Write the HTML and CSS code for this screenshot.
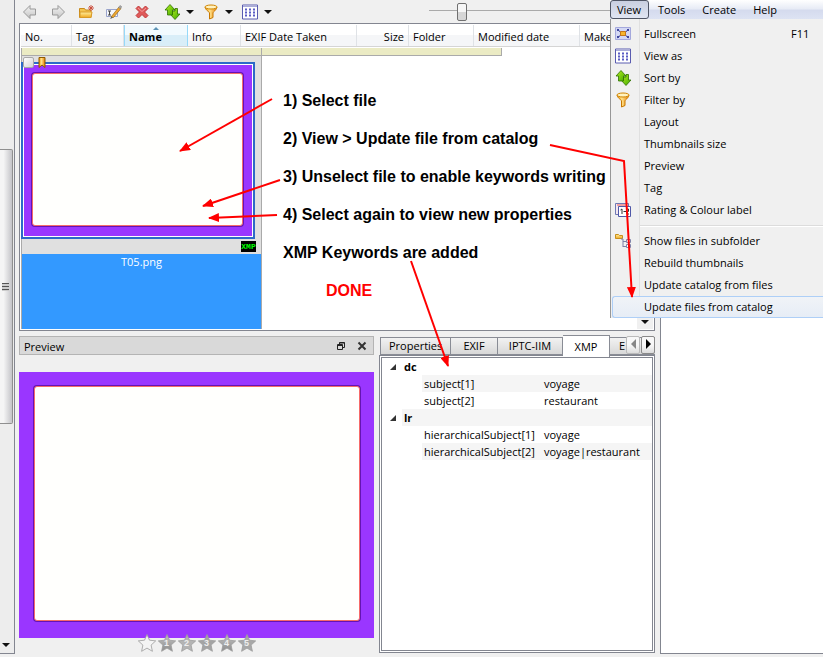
FILE: index.html
```html
<!DOCTYPE html>
<html lang="en">
<head>
<meta charset="utf-8">
<title>Photo catalog</title>
<link rel="stylesheet" href="styles.css">
</head>
<body>
<svg class="defs" aria-hidden="true">
  <defs>
    <linearGradient id="gold" x1="0" y1="0" x2="0" y2="1"><stop offset="0" stop-color="#fff0a0"/><stop offset="1" stop-color="#f0a820"/></linearGradient>
    <linearGradient id="amber" x1="0" y1="0" x2="1" y2="0"><stop offset="0" stop-color="#f59a00"/><stop offset=".4" stop-color="#ffe28a"/><stop offset="1" stop-color="#e87c00"/></linearGradient>
    <linearGradient id="green" x1="0" y1="0" x2="1" y2="1"><stop offset="0" stop-color="#b8f020"/><stop offset="1" stop-color="#3fa800"/></linearGradient>
    <linearGradient id="steel" x1="0" y1="0" x2="0" y2="1"><stop offset="0" stop-color="#f4f4f4"/><stop offset="1" stop-color="#c4c4c4"/></linearGradient>
    <linearGradient id="silver" x1="0" y1="0" x2="0" y2="1"><stop offset="0" stop-color="#c4c4c4"/><stop offset="1" stop-color="#8c8c8c"/></linearGradient>
  </defs>
  <symbol id="i-back" viewBox="0 0 16 16"><path d="M1.500 8 8 1.500V5h5.500v6H8v3.500z" fill="url(#steel)" stroke="#999" stroke-linejoin="round"/></symbol>
  <symbol id="i-fwd" viewBox="0 0 16 16"><path d="M14.500 8 8 1.500V5H2.500v6H8v3.500z" fill="url(#steel)" stroke="#999" stroke-linejoin="round"/></symbol>
  <symbol id="i-folder" viewBox="0 0 16 16"><path d="M1.500 13.500v-9h5l1 1.500H13v7.500z" fill="#f3c552" stroke="#c88a1c"/><path d="M2 13.500V8h12l-1 5.500z" fill="url(#gold)" stroke="#d89a28"/><path d="M13 1v6M10 4h6M11 2l4 4M15 2l-4 4" stroke="#c84838" stroke-width=".9"/></symbol>
  <symbol id="i-rename" viewBox="0 0 16 16"><path d="M.5 5.500h11v7H.5z" fill="#f4f6fb" stroke="#9aa4cc"/><path d="M2 7h3M2 11h3M3.500 7v4" stroke="#444"/><path d="M5 13 13 3l2 1.500L7.500 13.500z" fill="#f0a830" stroke="#9a6a18" stroke-width=".7"/><path d="m12.500 3.500 1.500-2 1.800 1.200-1.500 2z" fill="#a8a8a8" stroke="#777" stroke-width=".5"/><path d="m5 13-.8 2 3.200-1.500z" fill="#555"/></symbol>
  <symbol id="i-delete" viewBox="0 0 16 16"><path d="M2 4.500 4.500 2 8 5.500 11.500 2 14 4.500 10.500 8l3.500 3.500-2.500 2.500L8 10.500 4.500 14 2 11.500 5.500 8z" fill="#e05a5a" stroke="#c03838" stroke-linejoin="round"/><path d="m4 4 4 3.500L12 4" stroke="#f29a9a" fill="none"/></symbol>
  <symbol id="i-sort" viewBox="0 0 16 16"><path d="M8.500 7H11V4.500h2.500V10H16l-5 5.500L6 10h2.500z" fill="url(#green)" stroke="#2e7000" stroke-width=".8"/><path d="M6 .5 11 6H8.500v5H3.500V6H1z" fill="url(#green)" stroke="#2e7000" stroke-width=".8"/></symbol>
  <symbol id="i-filter" viewBox="0 0 16 16"><path d="M2 3c1 4 4 4 4.500 6v6l3.500-1.500V9c.5-2 3-2 4-6z" fill="url(#amber)" stroke="#c87800"/><ellipse cx="8" cy="3" rx="6" ry="2" fill="#fff2c0" stroke="#d08400"/></symbol>
  <symbol id="i-grid" viewBox="0 0 16 16"><path d="M.5 1h15v14H.5z" fill="#fff" stroke="#5a5cb0"/><path d="M1 2.500h14" stroke="#a9acd8"/><path d="M3 5.500h10M3 8.500h10M3 11.500h10" stroke="#5a5cc4" stroke-width="2" stroke-dasharray="2 2"/></symbol>
  <symbol id="i-full" viewBox="0 0 16 16"><path d="M.5 1.500h15v12H.5z" fill="#d4d8f4" stroke="#a4a8dc"/><path d="m2 3 4 3.500M14 3l-4 3.500M2 12l4-3M14 12l-4-3" stroke="#30348c"/><path d="M2 3h2v2H2zM12 3h2v2h-2zM2 10h2v2H2zM12 10h2v2h-2z" fill="#4048a0"/><path d="M5.500 5.500h5v4h-5z" fill="#f7b52c" stroke="#c87818"/></symbol>
  <symbol id="i-rating" viewBox="0 0 16 16"><path d="M.5 1.500h13v11H.5z" fill="#f4e8f0" stroke="#6f78b4"/><path d="M2 3h10" stroke="#e88" stroke-width="1.500"/><path d="M3.500 4.500h12v10h-12z" fill="#fff" stroke="#4f58a8"/><path d="M5.500 8 7 7v5M8.500 9.500H11M12 7h1.500v2.500H12V12h2" fill="none" stroke="#333"/></symbol>
  <symbol id="i-tree" viewBox="0 0 16 16"><path d="M.5 5.500v-4h3l1 1h3v3z" fill="url(#gold)" stroke="#c88f1c"/><path d="M8 6v8M8 8.500h3M8 13.500h3M6 6h2" stroke="#7c7fa4" fill="none"/><path d="M11.500 6.500h4v3h-4zM11.500 11.500h4v3h-4z" fill="#fff" stroke="#8184aa"/></symbol>
  <symbol id="i-star" viewBox="0 0 20 20"><path d="m10 1.500 2.500 5.700 6.200.7-4.600 4.200 1.300 6.200-5.400-3.200-5.400 3.200 1.300-6.200L1.300 7.900l6.200-.7z" stroke="#9c9c9c" stroke-width=".8"/></symbol>
</svg>

<div class="app">
  <aside class="rail">
    <div class="rail-thumb"><span class="grip"></span></div>
    <span class="tri down"></span>
  </aside>

  <main class="workspace">
    <div class="toolbar">
      <button class="tool" aria-label="Back"><svg><use href="#i-back"/></svg></button>
      <button class="tool" aria-label="Forward"><svg><use href="#i-fwd"/></svg></button>
      <button class="tool" aria-label="New folder"><svg><use href="#i-folder"/></svg></button>
      <button class="tool" aria-label="Rename"><svg><use href="#i-rename"/></svg></button>
      <button class="tool" aria-label="Delete"><svg><use href="#i-delete"/></svg></button>
      <div class="drops">
        <button class="tool" aria-label="Sort by"><svg><use href="#i-sort"/></svg><span class="tri"></span></button>
        <button class="tool" aria-label="Filter by"><svg><use href="#i-filter"/></svg><span class="tri"></span></button>
        <button class="tool" aria-label="View as"><svg><use href="#i-grid"/></svg><span class="tri"></span></button>
      </div>
      <input class="zoom" type="range" min="0" max="100" value="13" aria-label="Thumbnail size">
    </div>

    <section class="list">
      <div class="columns">
        <button class="c-no">No.</button>
        <button class="c-tag">Tag</button>
        <button class="c-name">Name</button>
        <button class="c-info">Info</button>
        <button class="c-exif">EXIF Date Taken</button>
        <button class="c-size">Size</button>
        <button class="c-folder">Folder</button>
        <button class="c-date">Modified date</button>
        <button class="c-make">Make</button>
      </div>
      <div class="group-bar"></div>
      <div class="thumbs">
        <figure class="cell">
          <div class="cell-top">
            <div class="frame"><div class="picture small"></div></div>
            <input class="tick" type="checkbox" aria-label="Tag T05.png">
            <svg class="ribbon" viewBox="0 0 8 12"><path d="M1 .5h6v10L4 8l-3 2.500z" fill="url(#amber)" stroke="#8c5a00"/></svg>
            <span class="badge">XMP</span>
          </div>
          <figcaption>T05.png</figcaption>
        </figure>
      </div>
      <span class="scroll-end"><span class="tri"></span></span>
    </section>

    <div class="docks">
      <section class="preview">
        <header class="dock-title">
          <h2>Preview</h2>
          <button aria-label="Float"><svg viewBox="0 0 10 10"><path d="M3.500 3V1.500h5v5H7M1.500 3.500h5v5h-5zM1.500 4.500h5M3.500 2h5" fill="none" stroke="#222"/></svg></button>
          <button aria-label="Close"><svg viewBox="0 0 10 10"><path d="m1.500 1.500 7 7m0-7-7 7" stroke="#333" stroke-width="2"/></svg></button>
        </header>
        <div class="picture large"></div>
        <div class="stars">
          <button aria-label="No rating"><svg fill="#f4f4f4"><use href="#i-star"/></svg></button>
          <button><svg fill="url(#silver)"><use href="#i-star"/></svg><span>1</span></button>
          <button><svg fill="#b4b4b4"><use href="#i-star"/></svg><span>2</span></button>
          <button><svg fill="#a4a4a4"><use href="#i-star"/></svg><span>3</span></button>
          <button><svg fill="url(#silver)"><use href="#i-star"/></svg><span>4</span></button>
          <button><svg fill="#a8a8a8"><use href="#i-star"/></svg><span>5</span></button>
        </div>
      </section>

      <section class="props">
        <div class="tabs">
          <button class="t-prop">Properties</button>
          <button class="t-exif">EXIF</button>
          <button class="t-iptc">IPTC-IIM</button>
          <button class="t-xmp active">XMP</button>
          <button class="t-more">E</button>
          <div class="tab-scroll">
            <button aria-label="Previous tabs"><span class="tri left"></span></button>
            <button aria-label="Next tabs"><span class="tri right"></span></button>
          </div>
        </div>
        <div class="pane">
          <div class="pane-inner">
            <table>
              <colgroup><col class="k-open"><col class="k-indent"><col class="k-key"><col></colgroup>
              <tbody>
                <tr><td><span class="expander"></span></td><th colspan="3">dc</th></tr>
                <tr class="alt"><td></td><td></td><td>subject[1]</td><td>voyage</td></tr>
                <tr><td></td><td></td><td>subject[2]</td><td>restaurant</td></tr>
                <tr class="alt"><td><span class="expander"></span></td><th colspan="3">lr</th></tr>
                <tr><td></td><td></td><td>hierarchicalSubject[1]</td><td>voyage</td></tr>
                <tr class="alt"><td></td><td></td><td>hierarchicalSubject[2]</td><td>voyage|restaurant</td></tr>
              </tbody>
            </table>
          </div>
        </div>
      </section>
    </div>
  </main>

  <aside class="side"></aside>
</div>

<nav class="menu">
  <div class="menubar">
    <button class="open">View</button>
    <button>Tools</button>
    <button>Create</button>
    <button>Help</button>
  </div>
  <div class="menu-list">
    <button><svg><use href="#i-full"/></svg><span>Fullscreen</span><kbd>F11</kbd></button>
    <button><svg><use href="#i-grid"/></svg><span>View as</span></button>
    <button><svg><use href="#i-sort"/></svg><span>Sort by</span></button>
    <button><svg><use href="#i-filter"/></svg><span>Filter by</span></button>
    <button><span>Layout</span></button>
    <button><span>Thumbnails size</span></button>
    <button><span>Preview</span></button>
    <button><span>Tag</span></button>
    <button><svg><use href="#i-rating"/></svg><span>Rating &amp; Colour label</span></button>
    <hr>
    <button><svg><use href="#i-tree"/></svg><span>Show files in subfolder</span></button>
    <button><span>Rebuild thumbnails</span></button>
    <button><span>Update catalog from files</span></button>
    <button class="hot"><span>Update files from catalog</span></button>
  </div>
</nav>

<ol class="notes">
  <li>1) Select file</li>
  <li>2) View &gt; Update file from catalog</li>
  <li>3) Unselect file to enable keywords writing</li>
  <li>4) Select again to view new properties</li>
  <li>XMP Keywords are added</li>
  <li class="done">DONE</li>
</ol>

<svg class="arrows" width="823" height="657" viewBox="0 0 823 657" aria-hidden="true">
  <defs><marker id="head" markerUnits="userSpaceOnUse" markerWidth="11" markerHeight="9" refX="10" refY="4.500" orient="auto"><path d="M0 0 11 4.500 0 9z" fill="#f00"/></marker></defs>
  <g fill="none" stroke="#f00" stroke-width="2" marker-end="url(#head)">
    <path d="M272 99 180 151"/>
    <path d="M550 145 624 161 632 297"/>
    <path d="M280 180 203 206"/>
    <path d="M277 215 209 218"/>
    <path d="M411 261 448 366"/>
  </g>
</svg>
</body>
</html>
```

FILE: styles.css
```css
*, *::before { box-sizing: border-box; }

body {
  margin: 0;
  background: #f0f0f0;
  color: #000;
  font: 11px/16px "Open Sans", "Noto Sans", sans-serif;
  overflow: hidden;
}

button {
  margin: 0;
  padding: 0;
  border: 0;
  background: none;
  color: inherit;
  font: inherit;
  text-align: left;
}

.defs { position: absolute; width: 0; height: 0; }

.tri {
  display: inline-block;
  border: 4px solid transparent;
  border-top-color: #111;
  border-bottom: 0;
}
.tri.left { border: 5px solid transparent; border-right-color: #888; border-left: 0; }
.tri.right { border: 5px solid transparent; border-left-color: #000; border-right: 0; }

.app {
  display: grid;
  grid-template-columns: 15px minmax(0, 1fr) 163px;
  column-gap: 4px;
  height: 100vh;
}

/* left scroll column */
.rail {
  display: flex;
  flex-direction: column;
  align-items: flex-start;
  justify-content: space-between;
  margin-bottom: 4px;
  padding: 149px 0 6px;
  border-right: 1px solid #838690;
  border-bottom: 1px solid #838690;
  background: #ededed;
}
.rail-thumb {
  display: flex;
  align-items: center;
  width: 13px;
  height: 275px;
  padding-left: 2px;
  border: 1px solid #8f8f8f;
  border-left: 0;
  border-radius: 0 2px 2px 0;
  background: linear-gradient(90deg, #f5f5f5 30%, #c4c4c8);
}
.grip {
  width: 7px;
  height: 8px;
  background: repeating-linear-gradient(#555 0 1px, #ccc 1px 3px);
}
.rail .down { margin-left: 2px; }

.workspace {
  display: flex;
  flex-direction: column;
  min-width: 0;
}

.toolbar {
  display: flex;
  align-items: center;
  gap: 12px;
  flex: none;
  height: 23px;
  padding-left: 3px;
}
.tool { display: flex; align-items: center; gap: 6px; height: 16px; }
.tool svg { flex: none; width: 16px; height: 16px; }
.drops { display: flex; gap: 9px; margin-left: 2px; }

.zoom {
  appearance: none;
  flex: 1;
  min-width: 0;
  height: 20px;
  margin: 0 0 0 145px;
  background: linear-gradient(#aaa, #aaa) 0 8px / 100% 1px no-repeat;
}
.zoom::-webkit-slider-thumb {
  appearance: none;
  width: 10px;
  height: 18px;
  border: 1px solid #707070;
  border-radius: 2px;
  background: linear-gradient(#f6f6f6 50%, #d6d6d6 50%);
}

.list {
  position: relative;
  flex: none;
  height: 308px;
  margin-right: 1px;
  padding: 1px;
  border: 1px solid #838690;
  background: #fff;
}
.columns {
  display: flex;
  height: 22px;
  border-bottom: 1px solid #d5d5d5;
  overflow: hidden;
}
.columns button {
  flex: none;
  padding: 2px 4px 0;
  border-right: 1px solid #dfe2e6;
  background: linear-gradient(#fff 50%, #f5f6f8 50%);
  white-space: nowrap;
}
.c-no { width: 51px; }
.c-tag { width: 52px; }
.columns .c-name {
  position: relative;
  width: 64px;
  border: solid #96d9f9;
  border-width: 0 1px;
  background: linear-gradient(#f2fafe 50%, #d9eef8 50%);
  font-weight: 700;
}
.c-name::before {
  content: "";
  position: absolute;
  top: 2px;
  left: 28px;
  border: 3px solid transparent;
  border-bottom-color: #5d93b5;
  border-top: 0;
}
.c-info { width: 53px; }
.c-exif { width: 116px; }
.columns .c-size { width: 52px; text-align: right; }
.c-folder { width: 65px; }
.c-date { width: 106px; }
.columns .c-make { flex: 1; }

.group-bar {
  width: 481px;
  height: 8px;
  margin-top: 1px;
  border: 1px solid #aaa;
  border-top: 0;
  background: linear-gradient(#aaa, #aaa) 239px 0 / 1px 100% no-repeat #ebebc4;
}

.cell {
  width: 241px;
  margin: 0;
  border: solid #aaa;
  border-width: 0 1px;
}
.cell-top {
  position: relative;
  height: 198px;
  padding-top: 6px;
  background: #e0e0e0;
}
.frame {
  width: 234px;
  height: 177px;
  margin-left: -1px;
  padding: 1px;
  border: 2px solid #2c69c8;
  background: #fff;
}
.picture { background: #9a36ff; }
.picture::before {
  content: "";
  display: block;
  height: 100%;
  border: 1px solid #f66a6a;
  border-radius: 3px;
  background: #fffffd;
  box-shadow: 0 0 0 1px #6414b4;
}
.small { height: 100%; padding: 8px 9px 10px 8px; }
.large { height: 266px; padding: 14px 14px 17px 15px; }
.tick {
  appearance: none;
  position: absolute;
  top: 1px;
  left: 1px;
  width: 11px;
  height: 11px;
  margin: 0;
  border: 1px solid #a8a8a8;
  border-radius: 2px;
  background: linear-gradient(135deg, #fff, #d4d4d4);
}
.ribbon { position: absolute; top: 1px; left: 16px; width: 8px; height: 12px; }
.badge {
  position: absolute;
  right: 5px;
  bottom: 2px;
  width: 15px;
  height: 11px;
  background: #000;
  color: #0f0;
  font: 700 8px/11px "Liberation Mono", monospace;
  text-align: center;
}
figcaption {
  height: 75px;
  background: #39f;
  color: #fff;
  text-align: center;
}

.scroll-end {
  position: absolute;
  right: 1px;
  bottom: 1px;
  width: 16px;
  height: 13px;
  background: #f0f0f0;
  line-height: 8px;
  text-align: center;
}

.docks {
  display: grid;
  grid-template-columns: 355px minmax(0, 1fr);
  column-gap: 5px;
  flex: 1;
  min-height: 0;
  padding: 5px 1px 5px 0;
}

.dock-title {
  display: flex;
  align-items: center;
  gap: 11px;
  height: 19px;
  margin-bottom: 17px;
  padding: 0 6px 0 4px;
  border: 1px solid #b4b4b4;
  background: #d9d9d9;
}
.dock-title h2 { flex: 1; margin: 0; padding-top: 3px; font: inherit; }
.dock-title button, .dock-title svg { display: block; width: 10px; height: 10px; }

.stars {
  position: relative;
  display: flex;
  justify-content: center;
  margin-top: -5px;
}
.stars button { position: relative; width: 20px; height: 20px; }
.stars svg { display: block; width: 20px; height: 20px; }
.stars span {
  position: absolute;
  inset: 0;
  color: #eee;
  font: 700 9px/21px "Liberation Sans", sans-serif;
  text-align: center;
}

.props { display: flex; flex-direction: column; min-width: 0; }
.tabs {
  position: relative;
  display: flex;
  align-items: flex-end;
  flex: none;
  height: 19px;
  padding-left: 1px;
}
.tabs > button {
  flex: none;
  height: 18px;
  border: 1px solid #898c95;
  border-left-width: 0;
  background: linear-gradient(#f2f2f2, #d8d8d8);
  text-align: center;
}
.tabs .t-prop { width: 71px; border-left-width: 1px; text-align: left; padding-left: 8px; }
.t-exif { width: 47px; }
.t-iptc { width: 65px; }
.tabs .active {
  z-index: 1;
  width: 47px;
  height: 22px;
  margin: 0 0 -2px;
  border-bottom: 0;
  background: #fff;
}
.tabs .t-more { flex: 1; padding-left: 9px; text-align: left; border-right-width: 0; }
.tab-scroll {
  position: absolute;
  right: 0;
  bottom: 1px;
  display: flex;
  gap: 1px;
}
.tab-scroll button {
  width: 14px;
  height: 18px;
  border: 1px solid #8a8a8a;
  border-radius: 2px;
  background: linear-gradient(#f8f8f8 50%, #ddd);
  line-height: 14px;
  text-align: center;
}
.tab-scroll button:first-child { border-color: #bbb; }

.pane {
  flex: 1;
  padding: 1px;
  border: 1px solid #838690;
  background: #fff;
}
.pane-inner { height: 100%; border: 1px solid #838690; }

table { width: 100%; border-collapse: collapse; table-layout: fixed; }
.k-open, .k-indent { width: 20px; }
.k-key { width: 120px; }
tr { height: 17px; }
td, th { padding: 0 0 0 2px; line-height: 17px; font-weight: 400; text-align: left; white-space: nowrap; }
th { font-weight: 700; }
.alt th, .alt td:nth-child(n+3) { background: #f5f5f5; }
.expander {
  display: block;
  width: 0;
  margin-left: 6px;
  border-bottom: 6px solid #333;
  border-left: 6px solid transparent;
}

.side {
  margin: 23px 0 4px;
  border: 1px solid #838690;
  border-right: 0;
  background: #fff;
}

/* opened View menu */
.menu {
  position: absolute;
  top: 0;
  right: 0;
  width: 213px;
  background: #f0f0f0;
}
.menubar {
  display: flex;
  height: 19px;
  background: linear-gradient(#fff, #e8ecf6 45%, #d5dbee 55%, #dde3f3);
}
.menubar button { padding: 0 8px 0 9px; line-height: 18px; }
.menubar .open {
  width: 39px;
  border: 1px solid #4f5564;
  border-radius: 3px;
  background: linear-gradient(#c9cfe0, #e0e5f2);
  line-height: 16px;
  padding: 0 6px;
}
.menu-list {
  padding: 4px 0 0 1px;
  border-left: 1px solid #979797;
  background: linear-gradient(#e0e0e0, #e0e0e0) 28px 0 / 1px 100% no-repeat;
}
.menu-list button {
  display: grid;
  grid-template-columns: 31px 1fr 46px;
  align-items: center;
  width: 100%;
  height: 22px;
  border: 1px solid transparent;
  border-right: 0;
}
.menu-list svg { width: 16px; height: 16px; margin-left: 2px; }
.menu-list span { grid-column: 2; }
.menu-list svg, .menu-list span, .menu-list kbd { grid-row: 1; }
.menu-list kbd { padding-left: 14px; font: inherit; }
.menu-list hr {
  height: 2px;
  margin: 4px 0 3px 28px;
  border: 0;
  border-top: 1px solid #dcdcdc;
  border-bottom: 1px solid #fff;
}
.menu-list .hot {
  border-color: #aecff7;
  border-radius: 3px 0 0 3px;
  background: linear-gradient(#f0f3f7, #e6edf6);
}

/* callouts drawn over the window */
.notes {
  position: absolute;
  top: 82px;
  left: 283px;
  margin: 0;
  padding: 0;
  list-style: none;
  font: 700 16px/38px "Liberation Sans", Arial, sans-serif;
  white-space: nowrap;
}
.done { padding-left: 43px; color: #f00; }
.arrows { position: absolute; top: 0; left: 0; pointer-events: none; }
```
